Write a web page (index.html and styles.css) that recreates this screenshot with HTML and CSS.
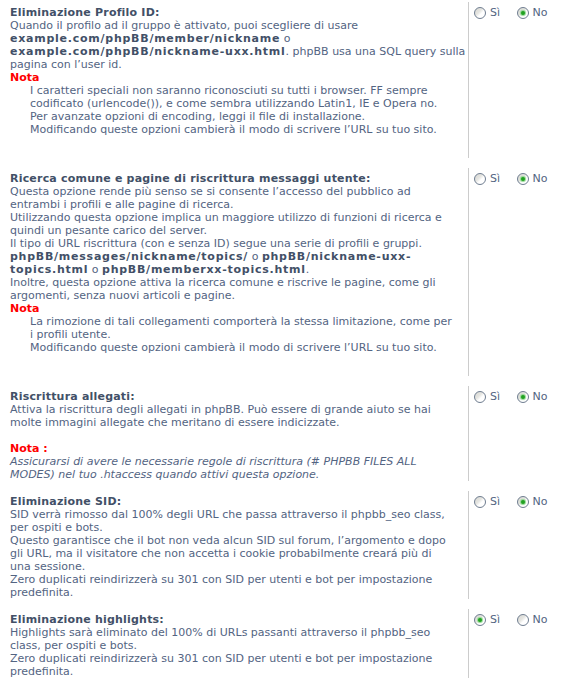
FILE: index.html
```html
<!DOCTYPE html>
<html lang="it">
<head>
    <meta charset="UTF-8">
    <title>phpBB SEO - Riscrittura URL</title>
    <link rel="stylesheet" href="styles.css">
</head>
<body>
    <div class="settings">
        <dl class="option">
            <dt>
                <label>Eliminazione Profilo ID:</label>
                Quando il profilo ad il gruppo è attivato, puoi scegliere di usare<br>
                <b>example.com/phpBB/member/nickname</b> o<br>
                <b>example.com/phpBB/nickname-uxx.html</b>. phpBB usa una SQL query sulla<br>
                pagina con l’user id.
                <div class="note-title">Nota</div>
                <div class="note">
                    I caratteri speciali non saranno riconosciuti su tutti i browser. FF sempre<br>
                    codificato (urlencode()), e come sembra utilizzando Latin1, IE e Opera no.<br>
                    Per avanzate opzioni di encoding, leggi il file di installazione.<br>
                    Modificando queste opzioni cambierà il modo di scrivere l’URL su tuo sito.
                </div>
            </dt>
            <dd>
                <label class="choice"><input type="radio" class="radio" name="profile_noids"> Sì</label>
                <label class="choice"><input type="radio" class="radio" name="profile_noids" checked> No</label>
            </dd>
        </dl>

        <dl class="option">
            <dt>
                <label>Ricerca comune e pagine di riscrittura messaggi utente:</label>
                Questa opzione rende più senso se si consente l’accesso del pubblico ad<br>
                entrambi i profili e alle pagine di ricerca.<br>
                Utilizzando questa opzione implica un maggiore utilizzo di funzioni di ricerca e<br>
                quindi un pesante carico del server.<br>
                Il tipo di URL riscrittura (con e senza ID) segue una serie di profili e gruppi.<br>
                <b>phpBB/messages/nickname/topics/</b> o <b>phpBB/nickname-uxx-<br>topics.html</b> o <b>phpBB/memberxx-topics.html</b>.<br>
                Inoltre, questa opzione attiva la ricerca comune e riscrive le pagine, come gli<br>
                argomenti, senza nuovi articoli e pagine.
                <div class="note-title">Nota</div>
                <div class="note">
                    La rimozione di tali collegamenti comporterà la stessa limitazione, come per<br>
                    i profili utente.<br>
                    Modificando queste opzioni cambierà il modo di scrivere l’URL su tuo sito.
                </div>
            </dt>
            <dd>
                <label class="choice"><input type="radio" class="radio" name="profile_vfolder"> Sì</label>
                <label class="choice"><input type="radio" class="radio" name="profile_vfolder" checked> No</label>
            </dd>
        </dl>

        <dl class="option">
            <dt>
                <label>Riscrittura allegati:</label>
                Attiva la riscrittura degli allegati in phpBB. Può essere di grande aiuto se hai<br>
                molte immagini allegate che meritano di essere indicizzate.<br><br>
                <div class="note-title">Nota :</div>
                <i>Assicurarsi di avere le necessarie regole di riscrittura (# PHPBB FILES ALL<br>
                MODES) nel tuo .htaccess quando attivi questa opzione.</i>
            </dt>
            <dd>
                <label class="choice"><input type="radio" class="radio" name="rewrite_files"> Sì</label>
                <label class="choice"><input type="radio" class="radio" name="rewrite_files" checked> No</label>
            </dd>
        </dl>

        <dl class="option">
            <dt>
                <label>Eliminazione SID:</label>
                SID verrà rimosso dal 100% degli URL che passa attraverso il phpbb_seo class,<br>
                per ospiti e bots.<br>
                Questo garantisce che il bot non veda alcun SID sul forum, l’argomento e dopo<br>
                gli URL, ma il visitatore che non accetta i cookie probabilmente creará più di<br>
                una sessione.<br>
                Zero duplicati reindirizzerà su 301 con SID per utenti e bot per impostazione<br>
                predefinita.
            </dt>
            <dd>
                <label class="choice"><input type="radio" class="radio" name="rem_sid"> Sì</label>
                <label class="choice"><input type="radio" class="radio" name="rem_sid" checked> No</label>
            </dd>
        </dl>

        <dl class="option">
            <dt>
                <label>Eliminazione highlights:</label>
                Highlights sarà eliminato del 100% di URLs passanti attraverso il phpbb_seo<br>
                class, per ospiti e bots.<br>
                Zero duplicati reindirizzerà su 301 con SID per utenti e bot per impostazione<br>
                predefinita.
            </dt>
            <dd>
                <label class="choice"><input type="radio" class="radio" name="rem_hilit" checked> Sì</label>
                <label class="choice"><input type="radio" class="radio" name="rem_hilit"> No</label>
            </dd>
        </dl>
    </div>
</body>
</html>
```

FILE: styles.css
```css
/* Pannello impostazioni */
body {
    margin: 0;
    padding: 2px 0 0 0;
    background: #fff;
    font-family: Verdana, "DejaVu Sans", sans-serif;
    font-size: 11px;
    line-height: 13px;
    color: #536482;
}
.settings {
    width: 568px;
}
.option {
    display: flex;
    margin: 0 0 10px 0;
}
.option dt {
    flex: 0 0 458px;
    padding: 4px 0 0 10px;
    margin: 0;
}
.option dt label {
    display: block;
    font-weight: bold;
    letter-spacing: 0.2px;
    color: #425067;
}
.option dt b {
    letter-spacing: 0.75px;
    color: #425067;
}
.option dd {
    flex: 1;
    margin: 0;
    padding: 4px 0 0 5px;
    border-left: 1px solid #cccccc;
}
.note-title {
    color: #ff0000;
    font-weight: bold;
}
.note {
    padding-left: 20px;
    margin-bottom: 22px;
}

/* Radio stile XP */
.choice {
    display: inline-flex;
    align-items: center;
    margin-right: 13px;
}
.radio {
    -webkit-appearance: none;
    appearance: none;
    position: relative;
    width: 12px;
    height: 12px;
    margin: 0 4px 0 0;
    border: 1px solid #6f7d90;
    border-radius: 50%;
    background: linear-gradient(135deg, #d6d6d2 0%, #e6e6e2 40%, #ffffff 60%);
    box-sizing: border-box;
}
.radio:checked::after {
    content: "";
    position: absolute;
    left: 3px;
    top: 3px;
    width: 4px;
    height: 4px;
    border-radius: 50%;
    background: #21a121;
    box-shadow: 0 0 1px 1px #8fd68f;
}
```
